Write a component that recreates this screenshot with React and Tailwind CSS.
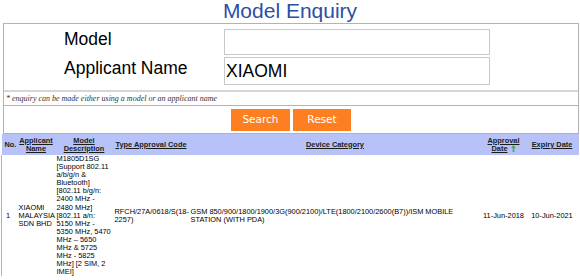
import React from 'react';

const modelLines = [
    "M1805D1SG",
    "[Support 802.11",
    "a/b/g/n &",
    "Bluetooth]",
    "[802.11 b/g/n:",
    "2400 MHz -",
    "2480 MHz]",
    "[802.11 a/n:",
    "5150 MHz -",
    "5350 MHz, 5470",
    "MHz \u2013 5650",
    "MHz & 5725",
    "MHz - 5825",
    "MHz] [2 SIM, 2",
    "IMEI]",
];

const Lines = ({ items }) => (
    <>
        {items.map((t, i) => (
            <span key={i} className="block whitespace-nowrap">{t}</span>
        ))}
    </>
);

const App = () => {
    return (
        <div className="h-[280px] w-[580px] overflow-hidden bg-white font-['Liberation_Sans',Arial,sans-serif] text-black">
            {/* TITLE */}
            <h1 className="h-[23px] text-center text-[21px] leading-[22px] text-[#2d4ea8]">Model Enquiry</h1>

            {/* FORM BOX */}
            <div className="ml-[3px] w-[576px] border border-[#b3b3b3]">
                <div className="flex flex-col gap-[2px] pt-[5px] pb-[5px]">
                    <div className="flex h-[26px] items-center">
                        <label className="mb-[4px] w-[220px] pl-[60px] text-[17.5px] leading-none">Model</label>
                        <input type="text" defaultValue="" className="h-[26px] w-[266px] border border-[#c9c9c9] px-[2px] text-[17.5px] outline-none" />
                    </div>
                    <div className="flex h-[28px] items-center">
                        <label className="mb-[4px] w-[220px] pl-[60px] text-[17.5px] leading-none">Applicant Name</label>
                        <input type="text" defaultValue="XIAOMI" className="h-[28px] w-[266px] border border-[#c9c9c9] px-[1px] text-[17.5px] outline-none" />
                    </div>
                </div>
                <div className="flex h-[16px] items-center border-t-2 border-b border-t-[#d6d6d6] border-b-[#b3b3b3] pl-[2px] font-['Liberation_Serif',serif] text-[8px] italic text-[#333]">
                    * enquiry can be made either using a model or an applicant name
                </div>
                <div className="flex h-[27px] items-center justify-center gap-[3px]">
                    <button className="h-[22px] w-[59px] bg-[#fd7f22] font-['DejaVu_Sans',Verdana,sans-serif] text-[10.5px] text-white">Search</button>
                    <button className="h-[22px] w-[58px] bg-[#fd7f22] font-['DejaVu_Sans',Verdana,sans-serif] text-[10.5px] text-white">Reset</button>
                </div>
            </div>

            {/* RESULTS */}
            <table className="ml-[1px] w-[577px] table-fixed border-collapse text-[7.4px] leading-[8.1px]">
                <colgroup>
                    <col className="w-[16px]" />
                    <col className="w-[37px]" />
                    <col className="w-[59px]" />
                    <col className="w-[75px]" />
                    <col className="w-[293px]" />
                    <col className="w-[44px]" />
                    <col className="w-[53px]" />
                </colgroup>
                <thead>
                    <tr className="h-[21px] bg-[#b7c3f8] font-bold leading-[8px] text-[#1c1c1c]">
                        <th className="pl-[3px] text-left align-middle">No.</th>
                        <th className="text-center align-middle underline">Applicant<br />Name</th>
                        <th className="text-center align-middle underline">Model<br />Description</th>
                        <th className="text-center align-middle underline whitespace-nowrap">Type Approval Code</th>
                        <th className="text-center align-middle underline">Device Category</th>
                        <th className="text-center align-middle">
                            <span className="underline">Approval</span><br />
                            <span className="underline">Date</span>
                            <svg width="5" height="7" viewBox="0 0 5 7" className="ml-[3px] inline-block align-[-1px]">
                                <path d="M2.5 0 L5 3 L3.4 3 L3.4 7 L1.6 7 L1.6 3 L0 3 Z" fill="#4caf50" />
                            </svg>
                        </th>
                        <th className="text-center align-middle underline whitespace-nowrap">Expiry Date</th>
                    </tr>
                </thead>
                <tbody>
                    <tr className="border-l border-[#b3b3b3]">
                        <td className="pl-[4px] align-middle">1</td>
                        <td className="pl-[1px] align-middle"><Lines items={["XIAOMI", "MALAYSIA", "SDN BHD"]} /></td>
                        <td className="pl-[2px] align-middle"><Lines items={modelLines} /></td>
                        <td className="pl-[1px] align-middle"><Lines items={["RFCH/27A/0618/S(18-", "2257)"]} /></td>
                        <td className="pl-[2px] align-middle"><Lines items={["GSM 850/900/1800/1900/3G(900/2100)/LTE(1800/2100/2600(B7))/ISM MOBILE", "STATION (WITH PDA)"]} /></td>
                        <td className="text-center align-middle whitespace-nowrap">11-Jun-2018</td>
                        <td className="text-center align-middle whitespace-nowrap">10-Jun-2021</td>
                    </tr>
                </tbody>
            </table>
        </div>
    );
};

export default App;
